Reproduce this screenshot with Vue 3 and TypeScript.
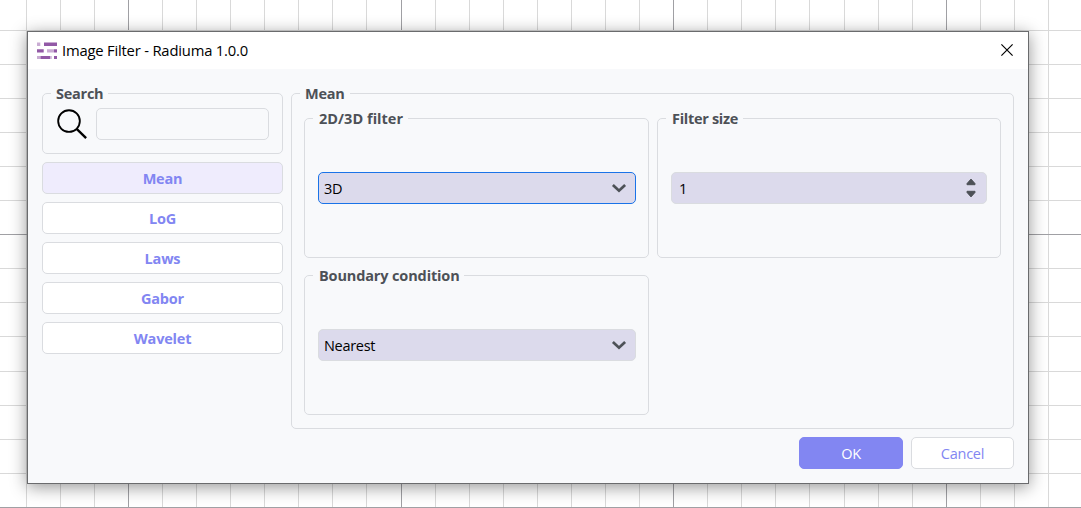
<script setup lang="ts">
import { ref } from 'vue'

interface GridLine { at: number; major: boolean }

const vertical: GridLine[] = [
  26, 60, 94, 128, 162, 196, 230, 264, 298, 332, 366, 401, 435, 469, 503, 537,
  571, 605, 639, 673, 707, 741, 775, 809, 844, 878, 912, 946, 980, 1014, 1048,
].map((at, i) => ({ at, major: i % 8 === 3 }))

const horizontal: GridLine[] = [
  30, 64, 98, 132, 166, 200, 234, 268, 302, 336, 371, 405, 439, 473, 507,
].map((at, i) => ({ at, major: i % 8 === 6 }))

const filters: string[] = ['Mean', 'LoG', 'Laws', 'Gabor', 'Wavelet']
const active = ref('Mean')
const query = ref('')
</script>

<template>
  <main class="canvas">
    <svg class="grid-lines" width="1081" height="508" aria-hidden="true" shape-rendering="crispEdges">
      <rect v-for="l in vertical" :key="'v' + l.at" :x="l.at" y="0" width="1" height="508" :fill="l.major ? '#a0a0a4' : '#d9d9d9'" />
      <rect v-for="l in horizontal" :key="'h' + l.at" x="0" :y="l.at" width="1081" height="1" :fill="l.major ? '#a0a0a4' : '#d9d9d9'" />
    </svg>
    <section class="dialog">
      <header class="titlebar">
        <svg class="logo" width="20" height="17" viewBox="0 0 20 17">
          <g fill="#9259a6">
            <path d="M7 .5h13V4H7zM0 7.2h6.7v3.4H0zM17 7.2h3v3.4h-3zM3.3 14h10v3h-10zM17 14h3v3h-3z" />
          </g>
          <path fill="#c9acd3" d="M0 .5h3.3V4H0zM10 7.2h7v3.4h-7zM0 14h3.3v3H0zM13.3 14h1.4v3h-1.4z" />
        </svg>
        <span class="title">Image Filter - Radiuma 1.0.0</span>
        <svg class="close" width="12" height="12" viewBox="0 0 12 12">
          <path d="M.4.4l11.2 11.2M11.6.4L.4 11.6" stroke="#000" stroke-width="1.15" fill="none" />
        </svg>
      </header>
      <div class="body">
        <aside class="sidebar">
          <fieldset class="group search">
            <legend>Search</legend>
            <div class="search-row">
              <svg width="31" height="31" viewBox="0 0 31 31">
                <circle cx="12.4" cy="12" r="11.2" fill="none" stroke="#000" stroke-width="1.9" />
                <path d="M20.3 20L30.1 29.6" stroke="#000" stroke-width="2.4" />
              </svg>
              <input v-model="query" class="search-input" type="text" />
            </div>
          </fieldset>
          <button v-for="f in filters" :key="f" class="btn filter" :class="{ active: f === active }" @click="active = f">{{ f }}</button>
        </aside>
        <div class="main">
          <fieldset class="group panel">
            <legend>{{ active }}</legend>
            <div class="options">
              <fieldset class="group option">
                <legend class="l-dim">2D/3D filter</legend>
                <div class="field focused">
                  <span>3D</span>
                  <svg width="16" height="10" viewBox="0 0 16 10"><path d="M1.9 1.9L8 7.7l6.1-5.8" /></svg>
                </div>
              </fieldset>
              <fieldset class="group option">
                <legend class="l-size">Filter size</legend>
                <div class="field spin">
                  <span>1</span>
                  <svg class="arrows" width="10" height="20" viewBox="0 0 10 20">
                    <path d="M5 1.1L9 5.6V6.7H1V5.6zM5 18.9L9 14.4V13.3H1v1.1z" />
                  </svg>
                </div>
              </fieldset>
              <fieldset class="group option">
                <legend class="l-bound">Boundary condition</legend>
                <div class="field">
                  <span>Nearest</span>
                  <svg width="16" height="10" viewBox="0 0 16 10"><path d="M1.9 1.9L8 7.7l6.1-5.8" /></svg>
                </div>
              </fieldset>
            </div>
          </fieldset>
          <footer class="actions">
            <button class="btn ok">OK</button>
            <button class="btn cancel">Cancel</button>
          </footer>
        </div>
      </div>
    </section>
  </main>
</template>

<style>
body { margin: 0; overflow: hidden; }
</style>

<style scoped>
.canvas {
  position: relative;
  box-sizing: border-box;
  width: 1081px;
  height: 508px;
  padding: 31px 0 0 27px;
  overflow: hidden;
  background: #fff;
  font-family: "Open Sans", "Noto Sans", sans-serif;
  font-size: 14.5px;
  color: #000;
}
.canvas * { box-sizing: border-box; }
.grid-lines { position: absolute; left: 0; top: 0; }
.dialog {
  position: relative;
  width: 1002px;
  height: 453px;
  border: 1px solid #6a6b6d;
  background: #f8f9fb;
  box-shadow: 0 3px 16px rgba(0, 0, 0, .42);
}
.titlebar {
  display: flex;
  align-items: center;
  height: 37px;
  padding: 0 15px 0 9px;
  background: #fff;
}
.logo { margin-top: -1px; }
.title { margin: -2px 0 0 5px; font-size: 14.8px; letter-spacing: -.2px; line-height: 20px; white-space: nowrap; }
.close { margin: -2px 0 0 auto; }
.body { display: flex; gap: 8px; padding: 15px 14px 0; }
.sidebar { display: flex; flex-direction: column; gap: 8px; width: 241px; }
.group {
  min-width: 0;
  margin: 0;
  padding: 0;
  border: 1px solid #dadce0;
  border-radius: 5px;
}
.group > legend {
  height: 19px;
  margin-left: 8px;
  padding: 0 5px 0 5px;
  line-height: 19px;
  font-weight: 700;
  letter-spacing: -.25px;
  color: #4d5157;
  white-space: nowrap;
}
.group > .l-dim { padding-left: 6px; letter-spacing: .03px; }
.group > .l-size { padding-left: 6px; letter-spacing: -.3px; }
.group > .l-bound { padding-left: 6px; padding-right: 4px; letter-spacing: -.14px; }
.search { height: 70px; }
.search-row { display: flex; gap: 9px; padding: 5px 13px 0 14px; }
.search-row svg { margin-top: 1px; }
.search-input {
  width: 173px;
  height: 32px;
  padding: 0 6px;
  border: 1px solid #dadce0;
  border-radius: 5px;
  background: #f8f9fb;
  outline: none;
}
.btn {
  height: 32px;
  padding: 1px 0 0;
  border: 1px solid #dadce0;
  border-radius: 5px;
  background: #fff;
  color: #8286f2;
  font-family: inherit;
  font-size: 14.5px;
  line-height: 29px;
  letter-spacing: -.25px;
}
.filter { letter-spacing: -.2px; font-weight: 700; }
.active { background: #efecfd; }
.main { width: 723px; }
.panel { height: 345px; }
.options {
  display: grid;
  grid-template-columns: 345px 344px;
  grid-auto-rows: 149px;
  gap: 8px;
  padding: 6px 12px 0;
}
.field {
  display: flex;
  align-items: center;
  justify-content: space-between;
  height: 32px;
  margin: 44px 12.4px 0 13px;
  padding: 0 7.6px 0 5px;
  border: 1px solid #dadce0;
  border-radius: 5px;
  background: #dcdaec;
  line-height: 30px;
  letter-spacing: -.3px;
}
.field span { padding-top: 1px; line-height: 29px; }
.focused { border-color: #1a73e8; }
.field path { fill: none; stroke: #4d5157; stroke-width: 2.7; }
.spin { margin-right: 13px; padding: 0 10px 0 7px; }
.spin .arrows path { fill: #4d5157; stroke: #4d5157; stroke-width: 1; stroke-linejoin: round; }
.actions { display: flex; justify-content: flex-end; gap: 8px; margin-top: 8px; }
.ok { width: 104px; border-color: #8286f2; background: #8286f2; color: #fff; }
.cancel { width: 103px; }
</style>
